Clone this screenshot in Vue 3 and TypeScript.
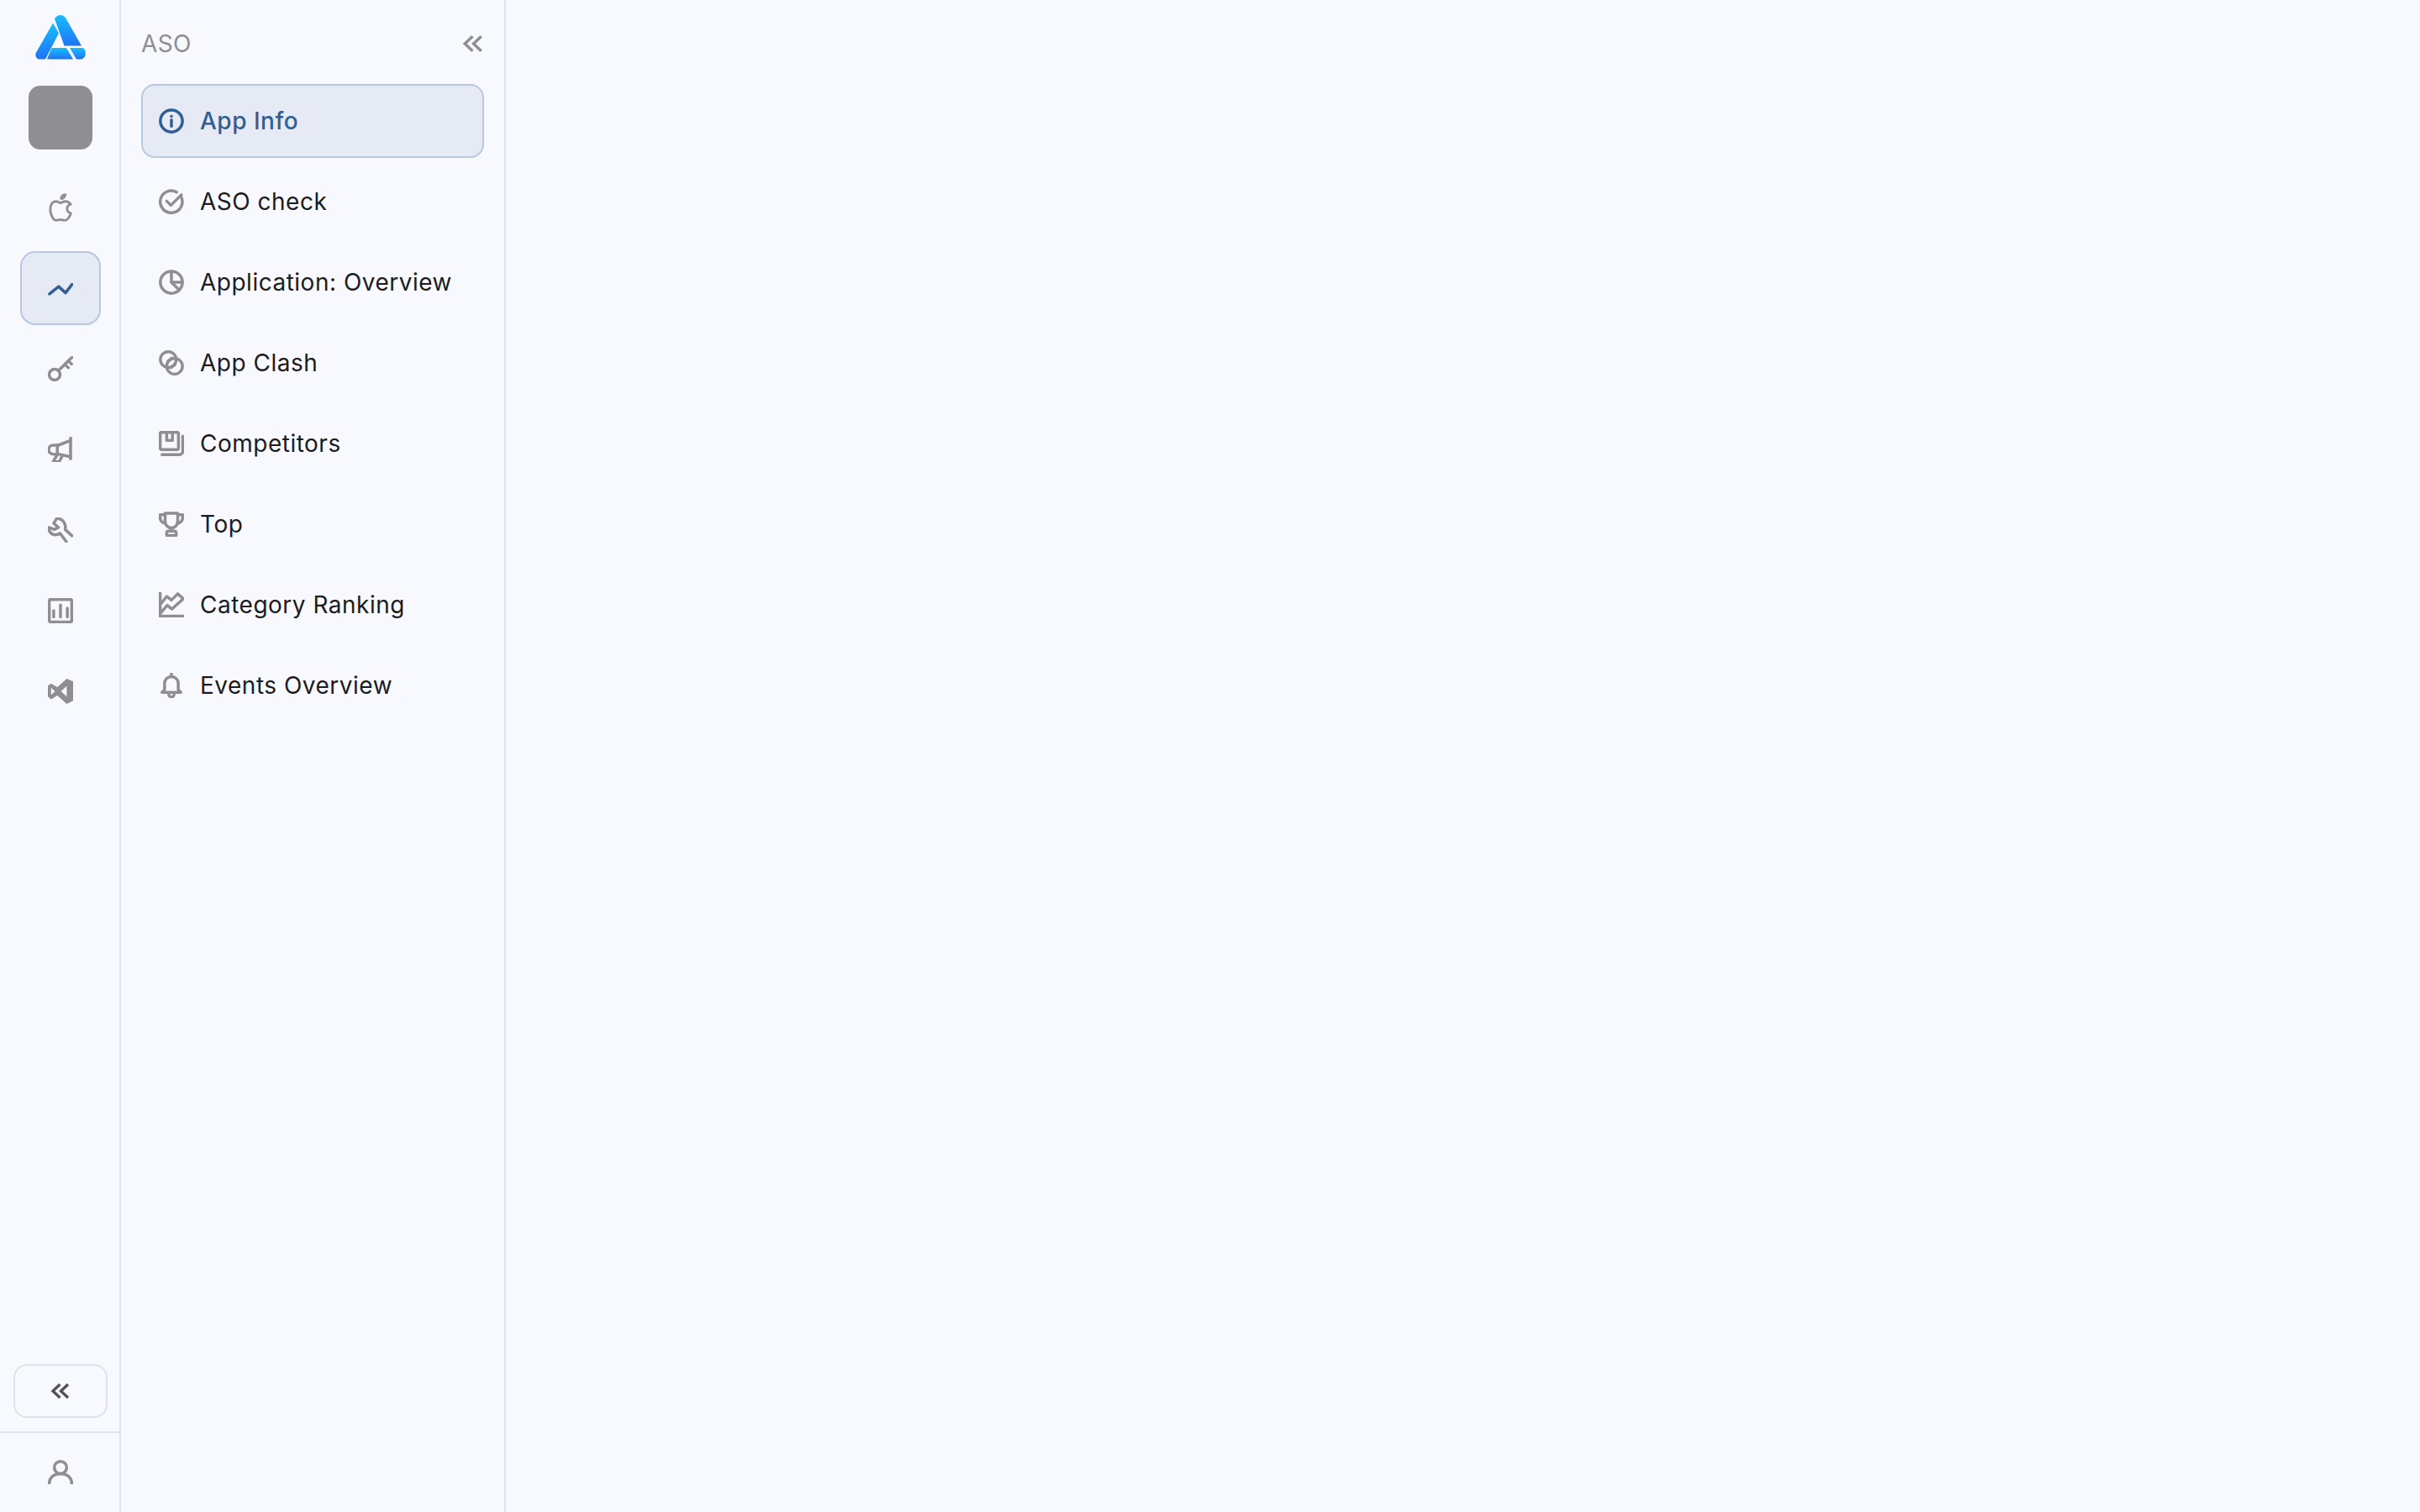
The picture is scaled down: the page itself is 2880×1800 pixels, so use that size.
<script setup lang="ts">
interface NavItem {
  label: string;
  icon: string;
  active?: boolean;
}

const railItems = [
  "apple",
  "trend",
  "key",
  "speaker",
  "wrench",
  "chart",
  "vscode",
];

const navItems: NavItem[] = [
  { label: "App Info", icon: "info", active: true },
  { label: "ASO check", icon: "check" },
  { label: "Application: Overview", icon: "pie" },
  { label: "App Clash", icon: "clash" },
  { label: "Competitors", icon: "saved" },
  { label: "Top", icon: "trophy" },
  { label: "Category Ranking", icon: "lines" },
  { label: "Events Overview", icon: "bell" },
];

const icons: Record<string, string[]> = {
  apple: [
    "M8.300 7C5.100 7 4 10.200 4 12.900 4 16.200 6.100 21 8.300 21c1.200-.05 1.800-.55 3.200-.55 1.400 0 1.600.55 3.200.55s4.300-3.200 4.300-5.400c0 0-2.650-.430-2.680-3.230-.02-2.330 2.590-3.180 2.680-3.230-1.100-1.600-3.160-2.110-3.750-2.150-1.530-.12-3.030 1.080-3.750 1.080-.730 0-2.040-1.080-3.200-1.080z",
    "M12 5a3 3 0 0 0 3-3 3 3 0 0 0-3 3z",
  ],
  trend: ["M1.500 17.500 10.300 10.500 16.800 16.500 23 8.500"],
  key: [
    "M6.400 12.400a5.200 5.200 0 1 0 0 10.400 5.200 5.200 0 0 0 0-10.400z",
    "M10 13.800 23 1",
    "M19.500 4.500l3 3",
    "M16 8l3.500 3",
  ],
  speaker: [
    "M21.600 1v20",
    "M21.600 3.500 10 8H5a4.200 4.200 0 0 0 0 8.500h5l11.600 2.500",
    "M9 8v8",
    "M9 17l-4 6.500h6L14 17.500",
  ],
  wrench: [
    "M23 17.500 16.500 11.500C17.500 5.500 13.500.5 8.500 1L5.500 5.500l4.500 4L6 11.500 1 9.500C.5 13 3 16.500 7 16.500c2 0 3.500-.5 4.500-1.500L17.500 23",
  ],
  chart: [
    "M2.500 1.300h19a1.200 1.200 0 0 1 1.200 1.200v19a1.200 1.200 0 0 1-1.200 1.200h-19a1.200 1.200 0 0 1-1.200-1.200v-19a1.200 1.200 0 0 1 1.200-1.200z",
    "M5.500 12v6",
    "M12 6.500v11.500",
    "M18.500 9.500v8.500",
  ],
  info: [
    "M12 1.500a10.500 10.500 0 1 0 0 21 10.500 10.500 0 0 0 0-21z",
    "M12 11v6",
    "M12 7.500v.1",
  ],
  check: [
    "M21.500 8A10.500 10.500 0 1 1 17 3",
    "M7.500 11.500l4 4 10-10",
  ],
  pie: [
    "M12 1.500a10.500 10.500 0 1 0 0 21 10.500 10.500 0 0 0 0-21z",
    "M12 1.500V12l7.500 7.500",
    "M12 12h10.500",
  ],
  clash: [
    "M9 1.300a7.500 7.500 0 1 0 0 15 7.500 7.500 0 0 0 0-15z",
    "M15 7.700a7.500 7.500 0 1 0 0 15 7.500 7.500 0 0 0 0-15z",
    "M8.500 10.500l4-3",
    "M11.500 16.500l4-3",
  ],
  saved: [
    "M2.500 1.300h15a1.200 1.200 0 0 1 1.200 1.200v14a1.200 1.200 0 0 1-1.200 1.200h-15a1.200 1.200 0 0 1-1.200-1.200v-14a1.200 1.200 0 0 1 1.200-1.200z",
    "M7.500 2v7h5.500V2",
    "M22.800 5v14.500a3 3 0 0 1-3 3H3",
  ],
  trophy: [
    "M6 1.500h12v8a6 6 0 0 1-12 0v-8z",
    "M6 3H1.300v3a5 5 0 0 0 5 5",
    "M18 3h4.700v3a5 5 0 0 1-5 5",
    "M12 15.500v3",
    "M7.500 22.700v-2.700a1.500 1.500 0 0 1 1.500-1.500h6a1.500 1.500 0 0 1 1.500 1.500v2.700z",
  ],
  lines: [
    "M1.300 0v22.700H24",
    "M2 11l5.500-7 4.500 3.500L18 1.500l5 4.500",
    "M2 19.500l6-7 4.500 3.500 10-9",
  ],
  bell: [
    "M12 1v2",
    "M5.500 16V10a6.500 6.500 0 0 1 13 0v6l2.500 2.500H3z",
    "M9.500 20.500a2.500 2.500 0 0 0 5 0",
  ],
  user: [
    "M12 2.100a5.900 5.900 0 1 0 0 11.800 5.900 5.900 0 0 0 0-11.800z",
    "M1.300 23c0-5 4-9 10.700-9s10.700 4 10.700 9",
  ],
};
</script>

<template>
  <main class="page">
    <aside class="rail">
      <svg class="logo" viewBox="0 0 60 54" width="60" height="54">
        <defs>
          <linearGradient id="logoFill" x1="0" y1="0" x2="0" y2="1">
            <stop offset="0" stop-color="#18bdfd" />
            <stop offset="1" stop-color="#1f73f5" />
          </linearGradient>
        </defs>
        <path
          fill="url(#logoFill)"
          d="M21 10.500 1 45.500C-1 49 1.500 53.500 5.500 53.500H12L28 22.500z"
        />
        <path
          fill="url(#logoFill)"
          d="M23 5.500C25.500.5 33 -1 36.500 5L55 37.500H34.500z"
        />
        <path fill="url(#logoFill)" d="M19.500 40H37l8 13.500H14z" />
        <path
          fill="url(#logoFill)"
          d="M41 40H56c3 0 5 6 3 10-1 2-2.500 3.500-5 3.500H49z"
        />
      </svg>

      <div class="app-thumb"></div>

      <button
        v-for="name in railItems"
        :key="name"
        class="rail-item"
        :class="{ active: name === 'trend' }"
      >
        <svg v-if="name === 'vscode'" class="icon" viewBox="0 0 24 24">
          <path
            class="solid"
            d="M17.900 0 24 2.500V21L17.900 24 9 16 3 19.500 0 17V6.500L3 4.500 9 8zM17.900 7 12.500 12 17.900 17zM3 8.500v7L6.700 12z"
          />
        </svg>
        <svg v-else-if="name === 'apple'" class="icon apple" viewBox="3 1 17 21">
          <path v-for="d in icons.apple" :key="d" :d="d" />
        </svg>
        <svg v-else class="icon" viewBox="0 0 24 24">
          <path v-for="d in icons[name]" :key="d" :d="d" />
        </svg>
      </button>

      <button class="rail-toggle">
        <svg class="toggle-icon" viewBox="0 0 24 24">
          <path d="M11.500 4 3 12l8.500 8" />
          <path d="M21 4l-8.500 8 8.500 8" />
        </svg>
      </button>

      <div class="rail-user">
        <svg class="icon" viewBox="0 0 24 24">
          <path v-for="d in icons.user" :key="d" :d="d" />
        </svg>
      </div>
    </aside>

    <nav class="panel">
      <header class="panel-head">
        <span class="panel-title">ASO</span>
        <svg class="panel-collapse" viewBox="0 0 24 24">
          <path d="M11.500 4 3 12l8.500 8" />
          <path d="M21 4l-8.500 8 8.500 8" />
        </svg>
      </header>

      <ul class="nav-list">
        <li
          v-for="item in navItems"
          :key="item.label"
          class="nav-item"
          :class="{ active: item.active }"
        >
          <svg class="icon" viewBox="0 0 24 24">
            <path v-for="d in icons[item.icon]" :key="d" :d="d" />
          </svg>
          <span>{{ item.label }}</span>
        </li>
      </ul>
    </nav>

    <section class="content"></section>
  </main>
</template>

<style>
html,
body {
  margin: 0;
  background: #f8f9ff;
}
</style>

<style scoped>
* {
  box-sizing: border-box;
}

.page {
  display: flex;
  height: 100vh;
  overflow: hidden;
  background: #f8f9ff;
  font-family: Inter, "Liberation Sans", sans-serif;
  color: #1c1c1e;
}

.rail {
  width: 144px;
  flex-shrink: 0;
  display: flex;
  flex-direction: column;
  align-items: center;
  padding-top: 17px;
  gap: 8px;
  box-shadow: inset -2px 0 0 #e0e2e9;
}

.logo {
  display: block;
  height: 54px;
  margin-bottom: 23px;
}

.app-thumb {
  width: 76px;
  height: 76px;
  flex-shrink: 0;
  border-radius: 14px;
  background: #8e8e93;
  margin-bottom: 17px;
}

.rail-item {
  width: 96px;
  height: 88px;
  flex-shrink: 0;
  display: flex;
  align-items: center;
  justify-content: center;
  border: 2px solid transparent;
  border-radius: 18px;
  background: transparent;
  padding: 0;
}

.rail-item.active {
  background: #e5eaf4;
  border-color: #b9c8de;
}

.icon {
  width: 30px;
  height: 30px;
  flex-shrink: 0;
  fill: none;
  stroke: #8e8e93;
  stroke-width: 2.8;
  stroke-linecap: round;
  stroke-linejoin: round;
}

.icon.apple {
  width: 34px;
  height: 34px;
  stroke-width: 1.8;
}

.icon .solid {
  fill: #8e8e93;
  fill-rule: evenodd;
  stroke: none;
}

.rail-item.active .icon,
.nav-item.active .icon {
  stroke: #305f95;
}

.rail-toggle {
  margin-top: auto;
  width: 112px;
  height: 64px;
  flex-shrink: 0;
  display: flex;
  align-items: center;
  justify-content: center;
  border: 2px solid #e0e2e9;
  border-radius: 16px;
  background: transparent;
  padding: 0;
}

.toggle-icon {
  width: 24px;
  height: 24px;
  fill: none;
  stroke: #545458;
  stroke-width: 3.4;
}

.rail-user {
  width: 144px;
  height: 96px;
  margin-top: 8px;
  padding-bottom: 3px;
  display: flex;
  align-items: center;
  justify-content: center;
  border-top: 2px solid #e0e2e9;
}

.panel {
  width: 458px;
  flex-shrink: 0;
  padding: 0 24px;
  border-right: 2px solid #e0e2e9;
}

.panel-head {
  height: 100px;
  display: flex;
  align-items: center;
  justify-content: space-between;
  padding-top: 4px;
}

.panel-title {
  font-size: 28px;
  line-height: 32px;
  color: #8e8e93;
  letter-spacing: 0.4px;
}

.panel-collapse {
  width: 26px;
  height: 26px;
  fill: none;
  stroke: #8e8e93;
  stroke-width: 3.2;
}

.nav-list {
  list-style: none;
  margin: 0;
  padding: 0;
  display: flex;
  flex-direction: column;
  gap: 8px;
}

.nav-item {
  height: 88px;
  display: flex;
  align-items: center;
  gap: 19px;
  padding: 0 19px;
  border: 2px solid transparent;
  border-radius: 16px;
  font-size: 28px;
  letter-spacing: 0.5px;
}

.nav-item.active {
  background: #e5eaf4;
  border-color: #b9c8de;
  color: #305f95;
  font-weight: 500;
}

.content {
  flex: 1;
}
</style>
